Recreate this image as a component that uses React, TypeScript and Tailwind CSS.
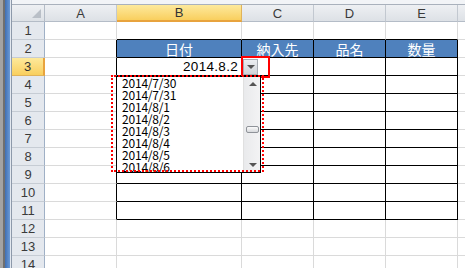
import React from "react";

const COLS = ["A", "B", "C", "D", "E", "F"];
const WIDTHS = ["w-[72px]", "w-[125px]", "w-[72px]", "w-[72px]", "w-[72px]", "w-[40px]"];
const HEADS: Record<number, string> = { 1: "日付", 2: "納入先", 3: "品名", 4: "数量" };
const ROWS = Array.from({ length: 14 }, (_, i) => i + 1);
const DATES = [
  "2014/7/30",
  "2014/7/31",
  "2014/8/1",
  "2014/8/2",
  "2014/8/3",
  "2014/8/4",
  "2014/8/5",
  "2014/8/6",
];

function Cell({ c, r }: { c: number; r: number }) {
  const inTable = c >= 1 && c <= 4 && r >= 2 && r <= 11;
  const blackRight = inTable || (c === 0 && r >= 2 && r <= 11);
  const blackBottom = inTable || (r === 1 && c >= 1 && c <= 4);
  const head = r === 2 && inTable;
  return (
    <div
      className={`${WIDTHS[c]} h-[18px] shrink-0 border-r border-b flex items-center ${
        blackRight ? "border-r-black" : "border-r-[#dadada]"
      } ${blackBottom ? "border-b-black" : "border-b-[#dadada]"} ${
        head ? "bg-[#4f81bd] justify-center text-white text-[14px]" : "bg-white"
      }`}
      style={{ fontFamily: '"Noto Sans CJK JP", sans-serif' }}
    >
      {head && <span className="leading-none">{HEADS[c]}</span>}
      {c === 1 && r === 3 && (
        <span className="ml-auto pr-[3px] text-[13.5px] leading-none text-black tracking-[0.3px] font-['Liberation_Sans',sans-serif]">
          2014.8.2
        </span>
      )}
    </div>
  );
}

export default function App() {
  return (
    <div className="relative w-[465px] h-[268px] overflow-hidden bg-white flex font-['Liberation_Sans',sans-serif]">
      {/* window frame */}
      <div className="flex shrink-0 h-full">
        <div className="w-[3px] bg-[#a3a3a3]" />
        <div className="w-[2px] bg-[#6f6f6f]" />
        <div className="w-[5px] bg-gradient-to-r from-[#3f6fb3] to-[#6b9ad6]" />
        <div className="w-[1px] bg-[#e3e8ef]" />
        <div className="w-[1px] bg-[#8d99aa]" />
      </div>

      <div className="flex flex-col flex-1 min-w-0">
        <div className="h-[5px] shrink-0 bg-[#f2f4f7] border-b border-[#a9b1bc]" />

        {/* column headers */}
        <div className="flex h-[17px] shrink-0">
          <div className="w-[33px] shrink-0 relative bg-gradient-to-b from-[#eef0f3] to-[#dde1e6] border-r border-b border-[#b4bcc7]">
            <div className="absolute right-[3px] bottom-[3px] w-0 h-0 border-l-[9px] border-l-transparent border-b-[9px] border-b-[#b9bfc7]" />
          </div>
          {COLS.map((col, i) => (
            <div
              key={col}
              className={`${WIDTHS[i]} shrink-0 flex items-center justify-center text-[13px] leading-none border-r ${
                i === 1
                  ? "bg-gradient-to-b from-[#fde99b] to-[#f9cf5d] border-b-2 border-b-[#e8a33e] border-r-[#e0b35a] text-[#333]"
                  : "bg-gradient-to-b from-[#eef0f3] to-[#dde1e6] border-b border-b-[#b4bcc7] border-r-[#c2c8d0] text-[#3a3a3a]"
              }`}
            >
              {col}
            </div>
          ))}
        </div>

        {/* rows */}
        {ROWS.map((r) => (
          <div key={r} className="flex h-[18px] shrink-0">
            <div
              className={`w-[33px] shrink-0 flex items-center justify-center text-[13px] leading-none border-b ${
                r === 3
                  ? "bg-gradient-to-b from-[#fde99b] to-[#f9cf5d] border-r-2 border-r-[#e8a33e] border-b-[#e0b35a] text-[#333]"
                  : "bg-[#e4e8ee] border-r border-r-[#9fb0c6] border-b-[#c6ccd4] text-[#3a3a3a]"
              }`}
            >
              {r}
            </div>
            {COLS.map((col, c) => (
              <Cell key={col} c={c} r={r} />
            ))}
          </div>
        ))}
      </div>

      {/* dropdown button */}
      <div className="absolute left-[243px] top-[59px] w-[15px] h-[16px] bg-gradient-to-b from-[#eceef1] to-[#cfd3d8] border border-[#a8adb4] flex items-center justify-center">
        <div className="w-0 h-0 border-l-[4px] border-r-[4px] border-t-[4px] border-l-transparent border-r-transparent border-t-[#555]" />
      </div>
      <div className="absolute left-[241px] top-[56px] w-[29px] h-[22px] border-2 border-[#ff0000]" />

      {/* dropdown list */}
      <div className="absolute left-[116px] top-[76px] w-[145px] h-[97px] bg-white border border-black flex">
        <div className="flex-1 flex flex-col pl-[5px] overflow-hidden">
          {DATES.map((d) => (
            <div
              key={d}
              className="h-[12px] shrink-0 text-[12px] leading-[12px] text-black font-['Noto_Sans_CJK_JP',sans-serif] tracking-[-0.2px]"
            >
              {d}
            </div>
          ))}
        </div>
        <div className="w-[17px] shrink-0 h-full relative bg-gradient-to-r from-[#e9eaec] to-[#f3f3f4] border-l border-[#e0e0e0]">
          <div className="absolute left-[5px] top-[5px] w-0 h-0 border-l-[4px] border-r-[4px] border-b-[4px] border-l-transparent border-r-transparent border-b-[#555]" />
          <div className="absolute left-[2px] top-[49px] w-[13px] h-[7px] rounded-[2px] border border-[#8f9399] bg-gradient-to-b from-[#fbfbfb] to-[#d7d9dc]" />
          <div className="absolute left-[5px] bottom-[5px] w-0 h-0 border-l-[4px] border-r-[4px] border-t-[4px] border-l-transparent border-r-transparent border-t-[#555]" />
        </div>
      </div>
      <div className="absolute left-[111px] top-[75px] w-[153px] h-[97px] border-2 border-dotted border-[#ff0000]" />
    </div>
  );
}
